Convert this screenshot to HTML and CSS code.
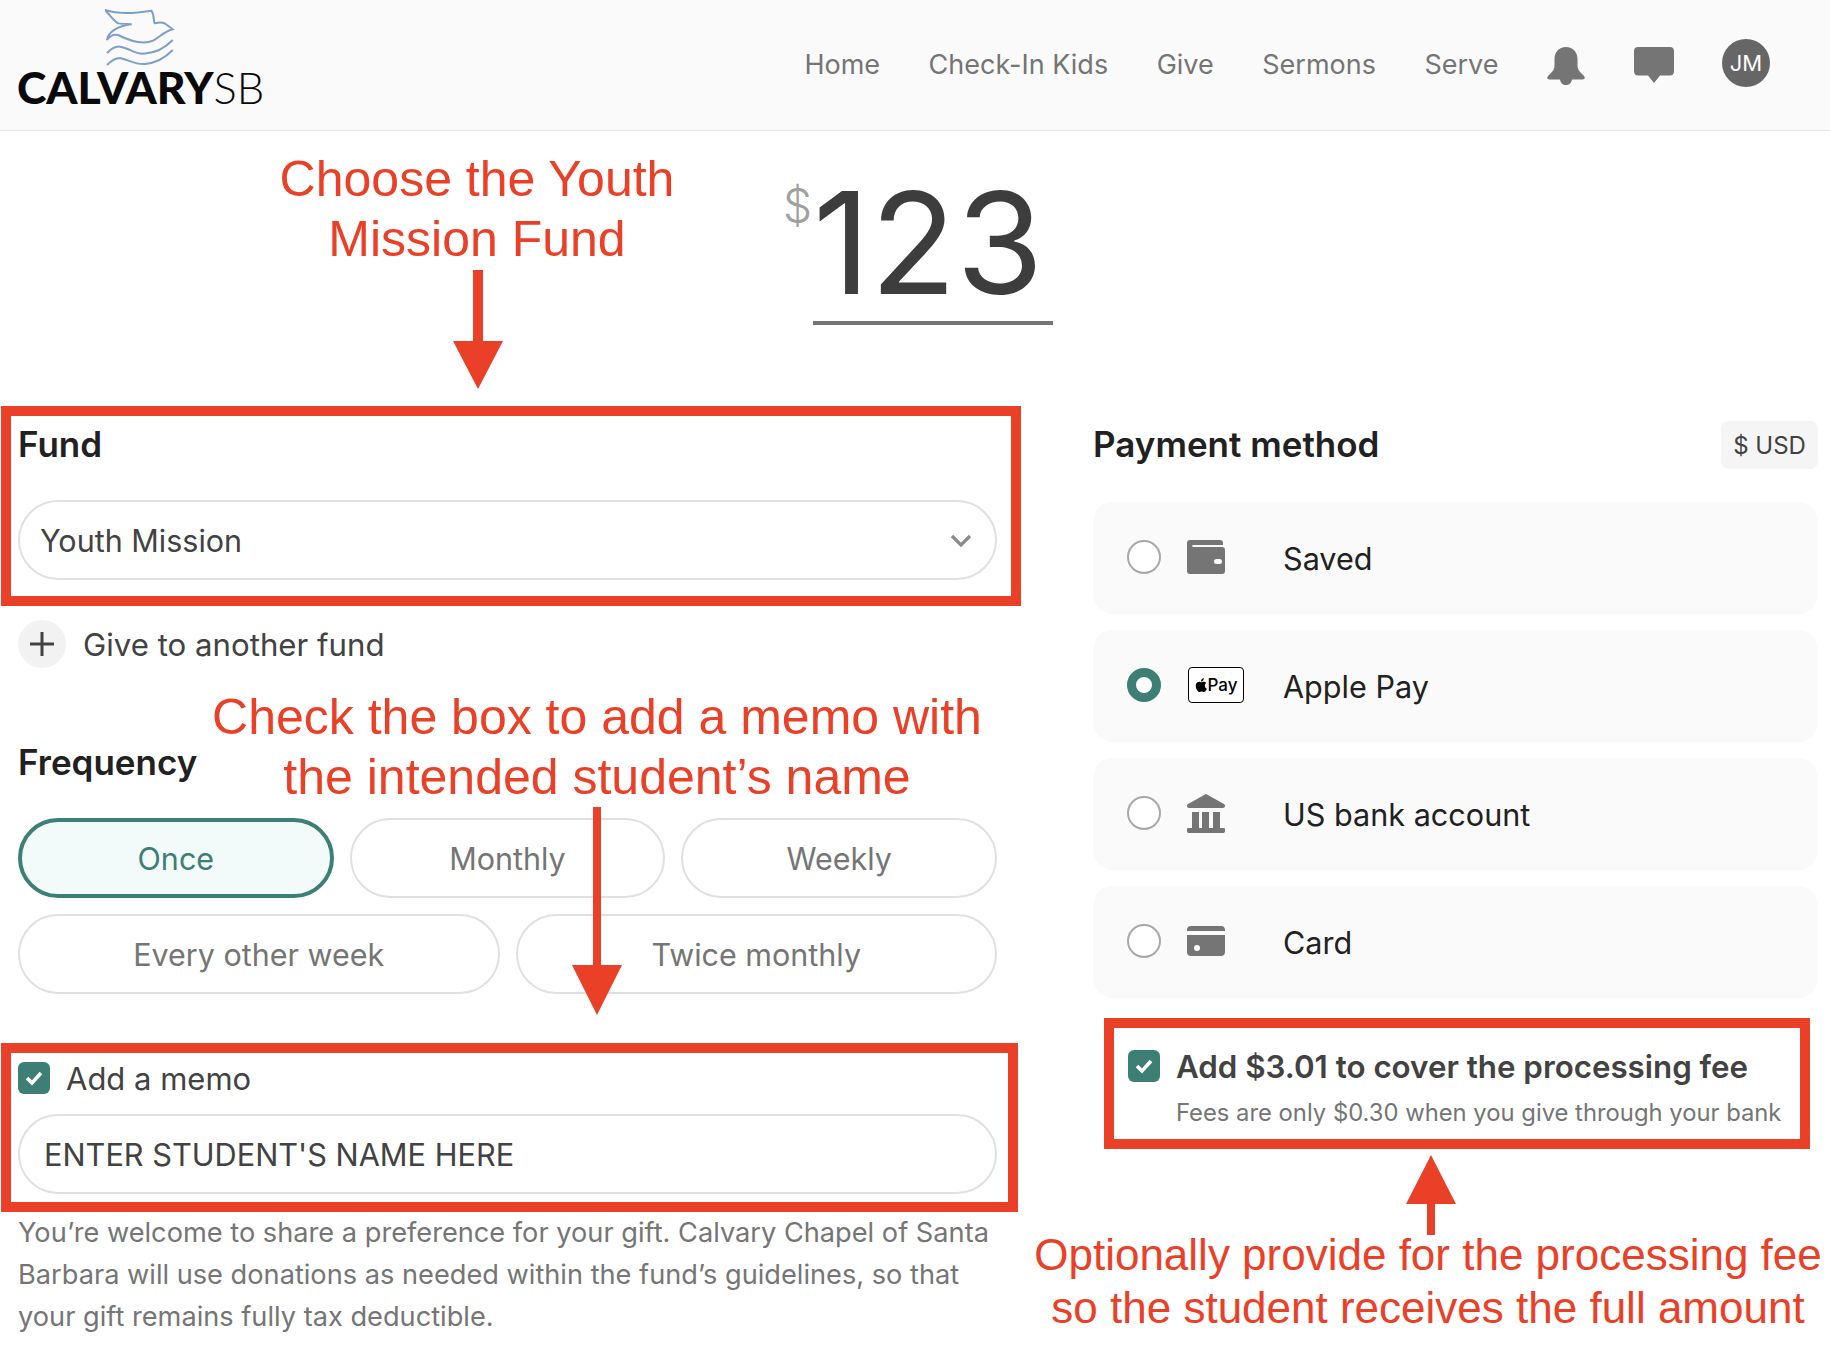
FILE: index.html
```html
<!DOCTYPE html>
<html lang="en">
<head>
<meta charset="utf-8">
<title>Give</title>
<link rel="stylesheet" href="styles.css">
</head>
<body>
<header class="topbar">
  <a class="logo">
    <svg class="dove" viewBox="0 0 70 60" width="70" height="60" fill="none" stroke="#7d9fc8" stroke-width="2">
      <path d="M0 2 C15 7 30 5 46.500 2.700 C50 8 48 15 50 15.300 C54 14 57 14 60 15.500 L67.700 21.300 C58 24 55 29 48 32.700 C38 37 25 33 13 27 C8 26 4 29 2 32 C3 24 12 18 26.700 16.300 C20 16 14 16 13 15.300 C8 12 4 6 0 2 Z"/>
      <path d="M2 45 C7 40 11 38 15 38.700 C25 40 30 47 40 45.500 C50 45 60 40 67.700 32"/>
      <path d="M2 57 C7 52 11 50 15 50 C25 52 30 57 40 56 C50 55 60 50 67.700 42"/>
    </svg>
    <span class="wordmark"><b>CALVARY</b><span>SB</span></span>
  </a>
  <nav class="nav">
    <a>Home</a><a>Check-In Kids</a><a>Give</a><a>Sermons</a><a>Serve</a>
    <svg class="nav-icon bell" viewBox="0 0 38 38" width="38" height="38"><path fill="#757575" d="M19 0 C26 0 30.500 5 30.500 12 V19 C30.500 23 34 26 37 29 C38.500 31 37.500 32.500 35.500 32.500 H25 C24.500 36 22 38 19 38 C16 38 13.500 36 13 32.500 H2.500 C.500 32.500 -.500 31 1 29 C4 26 7.500 23 7.500 19 V12 C7.500 5 12 0 19 0 Z"/></svg>
    <svg class="nav-icon chat" viewBox="0 0 40 36" width="40" height="36"><path fill="#757575" d="M4 0 H36 C38.500 0 40 1.500 40 4 V24 C40 27 38.500 28.500 36 28.500 H26 L20 36 L14 28.500 H4 C1.500 28.500 0 27 0 24 V4 C0 1.500 1.500 0 4 0 Z"/></svg>
    <span class="avatar">JM</span>
  </nav>
</header>

<main>
  <section class="amount-row">
    <span class="currency">$</span>
    <span class="amount">123</span>
  </section>

  <div class="columns">
    <section class="col-left">
      <h2 class="label">Fund</h2>
      <div class="pill select">
        <span>Youth Mission</span>
        <svg viewBox="0 0 22 14" width="22" height="14" fill="none" stroke="#8a8a8a" stroke-width="3.200"><path d="M2 2 L11 11 L20 2"/></svg>
      </div>
      <div class="add-fund">
        <span class="plus"><svg viewBox="0 0 26 26" width="26" height="26" stroke="#424242" stroke-width="3"><path d="M13 1 V25 M1 13 H25"/></svg></span>
        <span>Give to another fund</span>
      </div>
      <h2 class="label frequency-label">Frequency</h2>
      <div class="freq-row three">
        <div class="pill choice selected">Once</div>
        <div class="pill choice">Monthly</div>
        <div class="pill choice">Weekly</div>
      </div>
      <div class="freq-row two">
        <div class="pill choice">Every other week</div>
        <div class="pill choice">Twice monthly</div>
      </div>
      <div class="memo-row">
        <span class="check"><svg viewBox="0 0 20 20" width="20" height="20" fill="none" stroke="#fff" stroke-width="3.600"><path d="M3 10 L8 15 L17 5"/></svg></span>
        <span>Add a memo</span>
      </div>
      <div class="pill memo-input">ENTER STUDENT'S NAME HERE</div>
      <p class="help">You’re welcome to share a preference for your gift. Calvary Chapel of Santa Barbara will use donations as needed within the fund’s guidelines, so that your gift remains fully tax deductible.</p>
    </section>

    <section class="col-right">
      <div class="pay-head">
        <h2 class="label">Payment method</h2>
        <span class="usd">$ USD</span>
      </div>
      <div class="method">
        <span class="radio"></span>
        <span class="method-icon"><svg viewBox="0 0 38 34" width="38" height="34"><path fill="#757575" d="M3 0 H33 C35 0 36 1 36 3 V5 H6 C5 5 5 7 6 7 H35 C37 7 38 8 38 10 V31 C38 33 37 34 35 34 H3 C1 34 0 33 0 31 V3 C0 1 1 0 3 0 Z"/><rect x="27" y="19" width="8" height="5" rx="2.500" fill="#fff"/></svg></span>
        <span>Saved</span>
      </div>
      <div class="method">
        <span class="radio on"></span>
        <span class="method-icon"><span class="apay"><svg viewBox="0 0 14 17" width="12" height="14"><path d="M11.600 9 C11.600 7 13.200 6.100 13.300 6 C12.400 4.700 11 4.500 10.500 4.500 C9.200 4.400 8.100 5.200 7.400 5.200 C6.800 5.200 5.800 4.500 4.700 4.500 C3.300 4.600 2 5.400 1.300 6.600 C-.200 9.200 .900 13 2.300 15 C3 16 3.900 17.100 5 17 C6.100 17 6.500 16.300 7.800 16.300 C9.100 16.300 9.500 17 10.600 17 C11.800 17 12.500 16 13.200 15 C14 13.900 14 12.700 14 12.700 C14 12.700 11.600 11.800 11.600 9 Z M9.500 3 C10.100 2.300 10.500 1.300 10.400 .300 C9.500 .300 8.500 .900 7.900 1.600 C7.400 2.200 6.900 3.200 7 4.200 C8 4.300 8.900 3.700 9.500 3 Z"/></svg>Pay</span></span>
        <span>Apple Pay</span>
      </div>
      <div class="method">
        <span class="radio"></span>
        <span class="method-icon"><svg viewBox="0 0 38 39" width="38" height="39"><path fill="#757575" d="M19 0 L37 10 C38.500 11 38.500 14 36 14 H2 C-.500 14 -.500 11 1 10 Z M5 18 H12 V34 H15 V18 H22 V34 H26 V18 H33 V34 H37 C38 34 38 35 38 36 V37 C38 38.500 37 39 36 39 H2 C1 39 0 38.500 0 37 V36 C0 35 0 34 1 34 H5 Z"/></svg></span>
        <span>US bank account</span>
      </div>
      <div class="method">
        <span class="radio"></span>
        <span class="method-icon"><svg viewBox="0 0 38 30" width="38" height="30"><path fill="#757575" d="M4 0 H34 C36.500 0 38 1.500 38 4 V5 H0 V4 C0 1.500 1.500 0 4 0 Z M0 9 H38 V26 C38 28.500 36.500 30 34 30 H4 C1.500 30 0 28.500 0 26 Z"/><circle cx="10" cy="22" r="3" fill="#fff"/></svg></span>
        <span>Card</span>
      </div>
      <div class="fee">
        <span class="check"><svg viewBox="0 0 20 20" width="20" height="20" fill="none" stroke="#fff" stroke-width="3.600"><path d="M3 10 L8 15 L17 5"/></svg></span>
        <div class="fee-text">
          <div class="fee-title">Add $3.01 to cover the processing fee</div>
          <div class="fee-sub">Fees are only $0.30 when you give through your bank</div>
        </div>
      </div>
    </section>
  </div>
</main>

<div class="mark box-fund"></div>
<div class="mark box-memo"></div>
<div class="mark box-fee"></div>

<div class="note note-fund">Choose the Youth<br>Mission Fund</div>
<div class="note note-memo">Check the box to add a memo with<br>the intended student’s name</div>
<div class="note note-fee">Optionally provide for the processing fee<br>so the student receives the full amount</div>

<svg class="arrow arrow-fund" viewBox="0 0 50 120" width="50" height="120"><path d="M20 0 H30 V71 H50 L25 119 L0 71 H20 Z"/></svg>
<svg class="arrow arrow-memo" viewBox="0 0 50 208" width="50" height="208"><path d="M21 0 H29 V158 H50 L25 208 L0 158 H21 Z"/></svg>
<svg class="arrow arrow-fee" viewBox="0 0 50 80" width="50" height="80"><path d="M21 80 H29 V49 H50 L25 0 L0 49 H21 Z"/></svg>
</body>
</html>
```
FILE: styles.css
```css
* { box-sizing: border-box; }
html, body { margin: 0; padding: 0; }
body {
  position: relative;
  height: 1348px;
  overflow: hidden;
  background: #fff;
  font-family: Inter, "Liberation Sans", sans-serif;
  font-size: 28px;
  color: #424242;
}
.topbar {
  height: 131px;
  background: #fafafa;
  border-bottom: 1px solid #e8e8e8;
  display: flex;
  justify-content: space-between;
  padding: 0 60px 0 17px;
}
.logo { display: flex; flex-direction: column; align-items: flex-start; padding-top: 8px; }
.dove { margin-left: 88px; margin-bottom: -2px; }
.wordmark {
  font-family: Lato, "Liberation Sans", sans-serif;
  font-size: 44.500px;
  line-height: 42px;
  color: #0a0a0a;
  white-space: nowrap;
}
.wordmark b { font-weight: 900; }
.wordmark span { font-weight: 300; font-size: 43.500px; }
.nav { display: flex; align-items: center; color: #757575; font-size: 27px; padding-bottom: 1px; }
.nav a { margin-right: 48.500px; }
.nav-icon { flex: none; }
.bell { margin-right: 49px; margin-top: 3px; }
.chat { margin-right: 48px; }
.avatar {
  width: 48px; height: 48px; border-radius: 50%;
  background: #666; color: #fff;
  display: flex; align-items: center; justify-content: center;
  font-size: 22px;
  margin-bottom: 3px;
}
.amount-row {
  height: 290px;
  padding-left: 783px;
  display: flex;
  align-items: flex-start;
}
.currency { font-size: 46px; font-weight: 300; color: #a0a0a0; line-height: 53px; margin-top: 48px; width: 30px; flex: none; }
.amount {
  width: 240px; height: 155px;
  margin-top: 39px;
  font-size: 141px;
  line-height: 145px;
  font-weight: 400;
  color: #3d3d3d;
  border-bottom: 4px solid #757575;
  display: block;
}
.columns {
  display: grid;
  grid-template-columns: 979px 725px;
  column-gap: 96px;
  padding-left: 18px;
}
.label { margin: 0; font-size: 35px; line-height: 46px; font-weight: 600; color: #212121; height: 48px; }
.pill {
  height: 80px;
  border: 2px solid #e0e0e0;
  border-radius: 40px;
  display: flex;
  align-items: center;
  padding-top: 1px;
}
.select { margin-top: 31px; padding-left: 20px; padding-right: 23px; justify-content: space-between; font-size: 30.500px; }
.add-fund { display: flex; align-items: center; gap: 17px; margin-top: 40px; font-size: 31.200px; }
.add-fund span:last-child { padding-top: 1px; }
.plus { width: 48px; height: 48px; border-radius: 50%; background: #f2f2f2; display: flex; align-items: center; justify-content: center; }
.frequency-label { margin-top: 71px; }
.freq-row { display: grid; gap: 16px; margin-bottom: 16px; }
.three { grid-template-columns: repeat(3, 1fr); margin-top: 31px; }
.two { grid-template-columns: repeat(2, 1fr); }
.choice { justify-content: center; font-size: 30.500px; color: #757575; }
.selected { border: 4px solid #3d7f74; background: #f2fbf9; color: #3d7f74; }
.memo-row { display: flex; align-items: center; gap: 16px; margin-top: 68px; font-size: 31px; height: 32px; }
.check { width: 32px; height: 32px; border-radius: 6px; background: #3d7f74; display: flex; align-items: center; justify-content: center; flex: none; }
.memo-input { margin-top: 20px; padding-left: 24px; padding-right: 24px; font-size: 30.700px; }
.help { margin: 18px 0 0; font-size: 27.200px; line-height: 42px; color: #757575; }
.pay-head { display: flex; justify-content: space-between; align-items: center; }
.usd { background: #f5f5f5; border-radius: 8px; height: 48px; width: 97px; display: flex; align-items: center; justify-content: center; font-size: 24px; }
.method {
  height: 112px;
  background: #fafafa;
  border-radius: 20px;
  display: flex;
  align-items: center;
  padding-left: 34px;
  margin-top: 16px;
  font-size: 30.600px;
  color: #212121;
}
.pay-head + .method { margin-top: 33px; }
.radio { width: 34px; height: 34px; border-radius: 50%; border: 2px solid #a8a8a8; background: #fff; flex: none; margin-top: -2px; }
.radio.on { border: 9px solid #3d7f74; }
.method-icon { width: 122px; padding-left: 26px; display: flex; align-items: center; flex: none; margin-top: -2px; }
.apay { width: 56px; height: 36px; margin-left: 1px; border: 1.500px solid #000; border-radius: 4px; background: #fff; display: flex; align-items: center; justify-content: center; gap: 1px; font-size: 17px; color: #000; font-weight: 500; }
.fee { display: flex; gap: 16px; margin-top: 52px; padding-left: 35px; }
.fee-title { font-size: 31.300px; font-weight: 600; line-height: 34px; color: #424242; }
.fee-sub { font-size: 23.800px; line-height: 30px; color: #757575; margin-top: 14px; }

.mark { position: absolute; border: 10px solid #ea4027; }
.box-fund { left: 1px; top: 406px; width: 1020px; height: 200px; }
.box-memo { left: 1px; top: 1043px; width: 1017px; height: 169px; }
.box-fee { left: 1104px; top: 1018px; width: 706px; height: 131px; }
.note { position: absolute; font-family: "Liberation Sans", Arial, sans-serif; color: #ea4027; text-align: center; white-space: nowrap; }
.note-fund { left: 177px; width: 600px; top: 149px; font-size: 50px; line-height: 60px; }
.note-memo { left: 97px; width: 1000px; top: 687px; font-size: 50px; line-height: 60px; }
.note-fee { left: 1028px; width: 800px; top: 1228px; font-size: 44px; line-height: 53px; }
.arrow { position: absolute; fill: #ea4027; }
.arrow-fund { left: 453px; top: 270px; }
.arrow-memo { left: 572px; top: 807px; }
.arrow-fee { left: 1406px; top: 1155px; }
```
